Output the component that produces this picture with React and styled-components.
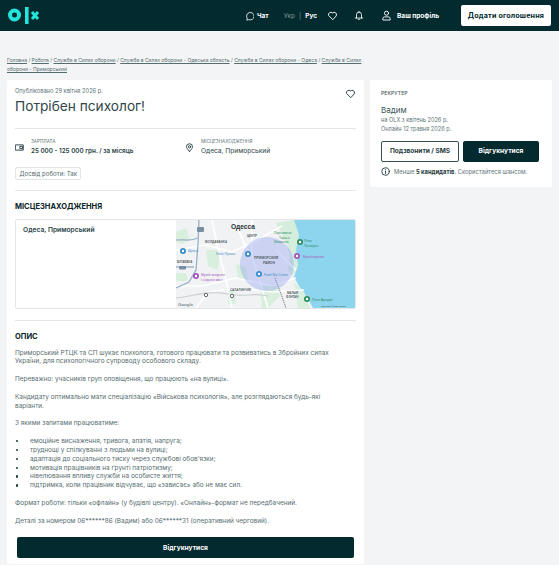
import React from "react";
import styled, { createGlobalStyle } from "styled-components";

const Global = createGlobalStyle`
  html, body { margin: 0; padding: 0; height: 565px; overflow: hidden; background: #f2f4f5; }
  body { font-family: Inter, "Liberation Sans", sans-serif; color: #3a5558; }
  * { box-sizing: border-box; }
`;
const Page = styled.div`width: 559px; height: 565px; overflow: hidden;`;
const Header = styled.header`
  height: 31px; background: #022a2f; display: flex; align-items: center;
  padding: 0 8px; color: #fff;
`;
const Logo = styled.svg`width: 32px; height: 18px; display: block; flex: none; margin-top: -1px;`;
const NavItem = styled.div`
  display: flex; align-items: center; gap: ${p => p.$gap || 5}px; margin-left: ${p => p.$left}px;
  font-size: 6.5px; font-weight: 700; color: #fff; white-space: nowrap;
`;
const Lang = styled.span`color: ${p => p.$active ? "#fff" : "#7f9799"}; font-weight: ${p => p.$active ? 700 : 400};`;
const Sep = styled.span`color: #7f9799; font-weight: 400; margin: 0 1px;`;
const AddButton = styled.button`
  margin-left: auto; width: 90px; height: 21px; border: 0; border-radius: 2px; background: #fff;
  color: #022a2f; font: 700 7.2px Inter, sans-serif; margin-top: -1px; letter-spacing: .15px; padding: 0;
`;
const Crumbs = styled.nav`
  padding: 25px 0 0 7px; width: 363px; height: 49px; font-size: 5px; line-height: 9px; color: #5d7477;
  a { color: #566d70; text-decoration: underline; }
`;
const Main = styled.main`display: flex; gap: 6px; padding: 0 7px; align-items: flex-start;`;
const Card = styled.section`
  background: #fff; width: ${p => p.$w}px; padding: ${p => p.$pad}; border-radius: 2px; flex: none;
`;
const TitleRow = styled.div`display: flex; justify-content: space-between; align-items: flex-start; height: 42px; border-bottom: 1px solid #e3e7e8;`;
const Published = styled.div`font-size: 5.7px; line-height: 7px; color: #5d7477;`;
const Title = styled.h1`margin: 2px 0 0; font-size: 13.7px; line-height: 20px; font-weight: 400; color: #2f474a;`;
const Facts = styled.div`display: flex; padding-top: 9px;`;
const Fact = styled.div`display: flex; align-items: center; gap: 7px; width: ${p => p.$w}px;`;
const FactLabel = styled.div`font-size: 4.6px; line-height: 7px; color: #5d7477;`;
const FactValue = styled.div`margin-top: 1px; font-size: ${p => p.$size}px; line-height: 11px; color: #2a4447; font-weight: ${p => p.$bold ? 600 : 400};`;
const Tag = styled.div`
  width: fit-content; margin-top: 10px; height: 13px; line-height: 11px; padding: 0 3.5px; border: 1px solid #dfe4e5; border-radius: 2px;
  font-size: 6.1px; color: #51696c;
`;
const Divider = styled.hr`border: 0; border-top: 1px solid #e3e7e8; margin: ${p => p.$m}; `;
const Heading = styled.h2`margin: 0; font-size: 7.5px; line-height: 12px; font-weight: 700; color: #0b2529;`;
const MapBox = styled.div`
  display: flex; height: 90px; margin-top: 6.5px; border: 1px solid #e3e7e8; border-radius: 2px; overflow: hidden;
`;
const MapLabel = styled.div`width: 160px; padding: 6px 7px; font-size: 6.7px; line-height: 9px; font-weight: 600; color: #2a4447;`;
const MapArt = styled.svg`flex: 1; display: block; height: 100%; min-width: 0;`;
const Body = styled.div`margin-top: 5.6px; font-size: 6.45px; line-height: 8.85px; color: #566d70; white-space: nowrap;`;
const Para = styled.p`margin: 0 0 8.85px;`;
const List = styled.ul`margin: 0 0 8.85px; padding: 0 0 0 15px; list-style: none;`;
const Item = styled.li`
  position: relative;
  &::before { content: ""; position: absolute; left: -14px; top: 3px; width: 2.4px; height: 2.4px; border-radius: 50%; background: #1e393c; }
`;
const Apply = styled.button`
  display: block; background: #022a2f; color: #fff; border: 0; border-radius: 2px; font: 700 6.6px Inter, sans-serif;
  width: ${p => p.$w}; height: ${p => p.$h}px; margin: ${p => p.$m || 0}; padding: 0; flex: none;
`;
const SideLabel = styled.div`font-size: 5.2px; line-height: 7px; color: #3f585b; font-weight: 500;`;
const Name = styled.div`margin-top: 8px; font-size: 8px; line-height: 11px; color: #3a5558;`;
const Meta = styled.div`font-size: 5.6px; line-height: 8.6px; color: #5d7477;`;
const Buttons = styled.div`display: flex; gap: 4px; margin-top: 7.5px;`;
const Outline = styled.button`
  width: 78px; height: 21px; background: #fff; border: 1px solid #37504f; border-radius: 2px; color: #1e393c;
  font: 700 6.5px Inter, sans-serif; padding: 0; flex: none;
`;
const Notice = styled.div`display: flex; align-items: center; gap: 4px; margin-top: 5px; font-size: 5.85px; line-height: 9px; color: #5d7477; white-space: nowrap; b { color: #1e393c; font-weight: 700; }`;

const Ic = styled.svg`display: block; fill: none; stroke: ${p => p.$c || "#fff"}; stroke-width: ${p => p.$sw || 1}; flex: none; stroke-linecap: round; stroke-linejoin: round;`;
const HeartWrap = styled.div`margin-top: 1px;`;

const MapText = styled.text`font-family: "Liberation Sans", Arial, sans-serif; font-size: ${p => p.$s || 3.6}px; font-weight: ${p => p.$w || 600}; fill: ${p => p.$c || "#555f66"}; letter-spacing: ${p => p.$ls || 0}px;`;

const GREEN = "#2f8f62", BLUE = "#3a8cc8", PURPLE = "#a555bd";

function Pin({ x, y, c }) {
  return <g><circle cx={x} cy={y} r="3" fill={c} /><circle cx={x} cy={y} r="1.2" fill="#fff" /></g>;
}

function MapPic() {
  return (
    <MapArt viewBox="0 0 179 88" preserveAspectRatio="none">
      <rect width="179" height="88" fill="#f0f2f4" />
      <path d="M100 3 118 0 123 14 121 30 122 45 117 56 112 50 114 36 110 22 Z" fill="#d4eedb" />
      <path d="M118 0H179V88H137L132 79 123 66 118 57 122 45 120 30 123 15Z" fill="#8dd5ee" />
      <path d="M0 12 10 8 14 20 6 24 0 22ZM0 53H10L12 61H0ZM30 30H44L42 50 32 46ZM52 70H58L60 84 52 84ZM84 66 100 64 104 76 92 88H86ZM118 62 128 72 134 88 122 88ZM60 44 70 48 72 60 62 58Z" fill="#d8efdd" />
      <path d="M0 30 30 25 56 32 78 22 106 6M36 0 42 28 50 60 56 88M76 0 76 36 92 88M0 66H26L60 58 96 66 120 58M20 88 32 72 60 68 96 72 128 70M58 0 74 36M100 30 120 50" stroke="#fff" strokeWidth="1.6" fill="none" />
      <path d="M0 78C20 76 30 70 52 74S70 72 92 76" stroke="#ccd1d5" strokeWidth="1.1" fill="none" />
      <path d="M23 0 22 24 20 50 13 62 0 68" stroke="#9ab0c8" strokeWidth="1.3" fill="none" />
      <path d="M0 20C8 19 14 22 22 18" stroke="#9ab0c8" strokeWidth="1.2" fill="none" />
      <path d="M0 47H18" stroke="#8fa6bf" strokeWidth="1.2" fill="none" />
      <path d="M99 58 105 74 110 88" stroke="#7d858a" strokeWidth="1" strokeDasharray="1.4 .7" fill="none" />
      <circle cx="91" cy="44" r="27" fill="#8f9df0" fillOpacity=".38" />
      <rect x="21" y="7" width="7" height="5" rx="1" fill="#7a8ea3" />
      <rect x="3" y="46" width="7" height="3.4" rx="1" fill="#7a8ea3" />
      <MapText x="55" y="9" $s="6.6" $w="700" $c="#2b3236">Одесса</MapText>
      <MapText x="71" y="17" $s="2.9">ЦЕНТР</MapText>
      <MapText x="29" y="23" $s="2.9" $ls=".15">МОЛДАВАНКА</MapText>
      <MapText x="1" y="43" $s="2.9">БУГАЕВКА</MapText>
      <MapText x="78" y="39" $s="3.4" $w="700">ПРИМОРСКИЙ</MapText>
      <MapText x="87" y="44" $s="3.4" $w="700">РАЙОН</MapText>
      <MapText x="54" y="71" $s="2.9" $ls=".1">САХАЛИНЧИК</MapText>
      <MapText x="111" y="74" $s="2.8">МАЛЫЙ</MapText>
      <MapText x="110" y="78" $s="2.8">ФОНТАН</MapText>
      <MapText x="98" y="14" $s="3.2" $w="400" $c={GREEN}>Парк имени</MapText>
      <MapText x="103" y="18.500" $s="3.2" $w="400" $c={GREEN}>Тараса</MapText>
      <MapText x="98" y="23" $s="3.2" $w="400" $c={GREEN}>Шевченко</MapText>
      <MapText x="128" y="22" $s="3.1" $w="400" $c={GREEN}>Пляж</MapText>
      <MapText x="128" y="27" $s="3.1" $w="400" $c={GREEN}>Ланжерон</MapText>
      <MapText x="127" y="37.500" $s="3" $w="400" $c={PURPLE}>Музей морских</MapText>
      <MapText x="136" y="81" $s="3.1" $w="400" $c={GREEN}>Пляж Аркадия</MapText>
      <MapText x="40" y="35" $s="3.2" $w="400" $c={BLUE}>Пекін Пузата</MapText>
      <MapText x="88" y="55.500" $s="3.2" $w="400" $c={BLUE}>Food Sky Center</MapText>
      <MapText x="25" y="56" $s="3.2" $w="400" $c={PURPLE}>Музей західного</MapText>
      <MapText x="25" y="61" $s="3.2" $w="400" $c={PURPLE}>і східного мист.</MapText>
      <MapText x="12" y="32" $s="3.2" $w="400" $c={BLUE}>Щепна</MapText>
      <MapText x="2" y="86" $s="4.4" $w="700" $c="#7d8a94">Google</MapText>
      <MapText x="145" y="86.500" $s="2.3" $w="400" $c="#444">Map data ©2026 Google</MapText>
      <Pin x={7} y={31} c={BLUE} />
      <Pin x={72} y={34} c={BLUE} />
      <Pin x={83} y={54} c={BLUE} />
      <Pin x={20} y={56} c={PURPLE} />
      <Pin x={121} y={36} c={PURPLE} />
      <Pin x={124} y={22} c={GREEN} />
      <Pin x={131} y={79} c={GREEN} />
      <circle cx="30" cy="75" r="1.7" fill="#fff" stroke="#666" strokeWidth="1" />
      <circle cx="56" cy="76" r="1.7" fill="#fff" stroke="#666" strokeWidth="1" />
    </MapArt>
  );
}

const HEART = "M12 20.500 3.500 12A5.200 5.200 0 0 1 12 6.500a5.200 5.200 0 0 1 8.500 5.500Z";

export default function App() {
  return (
    <Page>
      <Global />
      <Header>
        <Logo viewBox="0 0 32 18">
          <circle cx="6.500" cy="9" r="4.500" fill="none" stroke="#23e5db" strokeWidth="4" />
          <rect x="17" y="1" width="3.600" height="17" fill="#23e5db" />
          <path d="M24 6 L30 13 M30 6 L24 13" stroke="#23e5db" strokeWidth="3" />
        </Logo>
        <NavItem $left={204} $gap={3}>
          <Ic width="10" height="10" viewBox="0 0 24 24" $sw="2"><path d="M7 21 8 18A9 9 0 1 1 12 21Z" /></Ic>
          Чат
        </NavItem>
        <NavItem $left={15} $gap={3}>
          <Lang>Укр</Lang><Sep>|</Sep><Lang $active>Рус</Lang>
        </NavItem>
        <NavItem $left={10}>
          <Ic width="11" height="11" viewBox="0 0 24 24" $sw="2"><path d={HEART} /></Ic>
        </NavItem>
        <NavItem $left={16}>
          <Ic width="10" height="11" viewBox="0 0 24 24" $sw="2"><path d="M6 18V10a6 6 0 0 1 12 0v8M3 18h18M10 21h4M12 2v2" /></Ic>
        </NavItem>
        <NavItem $left={17} $gap={5}>
          <Ic width="11" height="11" viewBox="0 0 24 24" $sw="2"><circle cx="12" cy="7" r="4.500" /><path d="M4 21v-2a4 4 0 0 1 4-4h8a4 4 0 0 1 4 4v2Z" /></Ic>
          Ваш профіль
        </NavItem>
        <AddButton>Додати оголошення</AddButton>
      </Header>
      <Crumbs>
        <a>Головна</a> / <a>Робота</a> / <a>Служба в Силах оборони</a> / <a>Служба в Силах оборони - Одеська область</a> / <a>Служба в Силах оборони - Одеса</a> / <a>Служба в Силах оборони - Приморський</a>
      </Crumbs>
      <Main>
        <Card $w={357} $pad="7px 8px 6px">
          <TitleRow>
            <div>
              <Published>Опубліковано 29 квітня 2026 р.</Published>
              <Title>Потрібен психолог!</Title>
            </div>
            <HeartWrap>
              <Ic width="11" height="11" viewBox="0 0 24 24" $c="#1e393c" $sw="2"><path d={HEART} /></Ic>
            </HeartWrap>
          </TitleRow>
          <Facts>
            <Fact $w={170}>
              <Ic width="9" height="9" viewBox="0 0 24 24" $c="#1e393c" $sw="2.400"><rect x="2" y="5" width="20" height="14" /><path d="M14 9h6v6h-6Z" /></Ic>
              <div><FactLabel>ЗАРПЛАТА</FactLabel><FactValue $bold $size={6.3}>25 000 - 125 000 грн. / за місяць</FactValue></div>
            </Fact>
            <Fact $w={170}>
              <Ic width="9" height="9" viewBox="0 0 24 24" $c="#1e393c" $sw="2.400"><path d="M12 22C6 16 4 13 4 10a8 8 0 0 1 16 0c0 3-2 6-8 12Z" /><circle cx="12" cy="10" r="3" /></Ic>
              <div><FactLabel>МІСЦЕЗНАХОДЖЕННЯ</FactLabel><FactValue $size={6.6}>Одеса, Приморський</FactValue></div>
            </Fact>
          </Facts>
          <Tag>Досвід роботи: Так</Tag>
          <Divider $m="10px 0 9.5px" />
          <Heading>МІСЦЕЗНАХОДЖЕННЯ</Heading>
          <MapBox>
            <MapLabel>Одеса, Приморський</MapLabel>
            <MapPic />
          </MapBox>
          <Divider $m="11px 0 10px" />
          <Heading>ОПИС</Heading>
          <Body>
            <Para>Приморський РТЦК та СП шукає психолога, готового працювати та розвиватись в Збройних силах<br />України, для психологічного супроводу особового складу.</Para>
            <Para>Переважно: учасників груп оповіщення, що працюють «на вулиці».</Para>
            <Para>Кандидату оптимально мати спеціалізацію «Військова психологія», але розглядаються будь-які<br />варіанти.</Para>
            <Para>З якими запитами працюватиме:</Para>
            <List>
              <Item>емоційне виснаження, тривога, апатія, напруга;</Item>
              <Item>труднощі у спілкуванні з людьми на вулиці;</Item>
              <Item>адаптація до соціального тиску через службові обов'язки;</Item>
              <Item>мотивація працівників на ґрунті патріотизму;</Item>
              <Item>нівелювання впливу служби на особисте життя;</Item>
              <Item>підтримка, коли працівник відчуває, що «зависає» або не має сил.</Item>
            </List>
            <Para>Формат роботи: тільки «офлайн» (у будівлі центру). «Онлайн»-формат не передбачений.</Para>
            <Para>Деталі за номером 06******86 (Вадим) або 06******31 (оперативний черговий).</Para>
          </Body>
          <Apply $w="337px" $h={21} $m="12px 0 0 2px">Відгукнутися</Apply>
        </Card>
        <Card $w={182} $pad="10px 11px 11.5px">
          <SideLabel>РЕКРУТЕР</SideLabel>
          <Name>Вадим</Name>
          <Meta>на OLX з квітень 2026 р.</Meta>
          <Meta>Онлайн 12 травня 2026 р.</Meta>
          <Buttons>
            <Outline>Подзвонити / SMS</Outline>
            <Apply $w="76px" $h={21}>Відгукнутися</Apply>
          </Buttons>
          <Notice>
            <Ic width="9" height="9" viewBox="0 0 24 24" $c="#1e393c" $sw="2.400"><circle cx="12" cy="12" r="10" /><path d="M12 11v6M12 7v.5" /></Ic>
            <span>Менше <b>5 кандидатів</b>. Скористайтеся шансом.</span>
          </Notice>
        </Card>
      </Main>
    </Page>
  );
}
